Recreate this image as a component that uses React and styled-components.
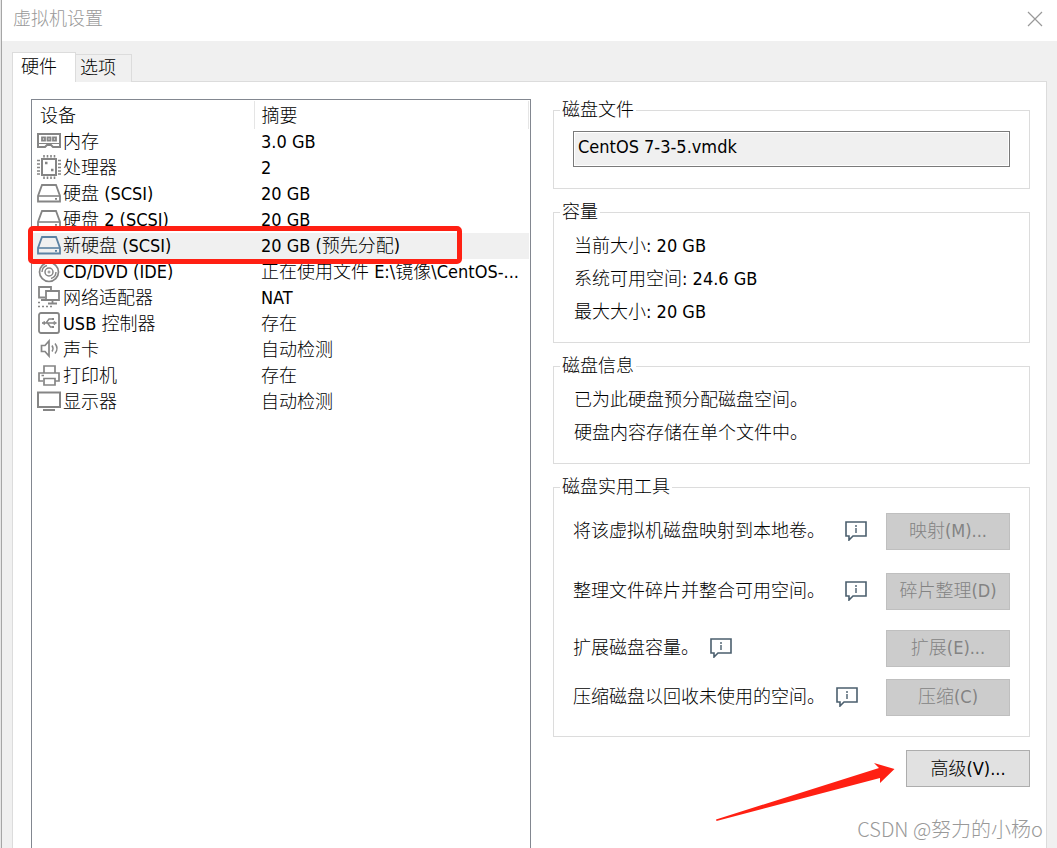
import styled, { createGlobalStyle } from "styled-components";

const GlobalStyle = createGlobalStyle`
  * {
    box-sizing: border-box;
  }
  body {
    margin: 0;
    background: #f0f0f0;
    color: #000;
    font-family: "DejaVu Sans Condensed", "Noto Sans CJK SC", sans-serif;
    font-size: 18px;
    font-weight: 300;
    line-height: 26px;
  }
  button, input {
    font: inherit;
  }
`;

const Window = styled.div`
  position: relative;
  display: flex;
  flex-direction: column;
  height: 100vh;
  overflow: hidden;
  padding-left: 1px;
  border-left: 1px solid #e6e6e6;
  background: #a6a6a6;
`;

const TitleBar = styled.header`
  display: flex;
  flex: none;
  align-items: center;
  justify-content: space-between;
  height: 41px;
  padding: 0 14px 4px 11px;
  background: #fff;
`;

const Title = styled.h1`
  margin: 0;
  color: #999;
  font-size: 18px;
  font-weight: 300;
`;

const CloseButton = styled.button`
  display: flex;
  padding: 0;
  border: 0;
  background: none;
`;

const Body = styled.div`
  display: flex;
  flex-direction: column;
  flex: 1;
  min-height: 0;
  background: #f0f0f0;
`;

const TabBar = styled.div`
  display: flex;
  flex: none;
  align-items: flex-end;
  height: 41px;
  padding: 0 10px;
`;

const Tab = styled.button`
  position: relative;
  height: ${(props) => (props.$active ? 30 : 28)}px;
  width: ${(props) => (props.$active ? 64 : 56)}px;
  padding: 0 0 2px ${(props) => (props.$active ? 8 : 4)}px;
  border: 1px solid #dcdcdc;
  border-left-width: ${(props) => (props.$active ? 1 : 0)}px;
  border-bottom-width: 0;
  background: ${(props) => (props.$active ? "#fff" : "#f0f0f0")};
  color: #000;
  text-align: left;
  z-index: ${(props) => (props.$active ? 1 : 0)};
`;

const Panel = styled.main`
  display: grid;
  grid-template-columns: 500px 1fr;
  gap: 22px;
  flex: 1;
  min-height: 0;
  margin: -1px 10px 0;
  padding: 17px 16px 0 18px;
  border: 1px solid #dcdcdc;
  border-bottom: 0;
  background: #fff;
`;

const DeviceList = styled.section`
  padding: 1px;
  border: 1px solid #828790;
  border-bottom: 0;
`;

const Table = styled.table`
  width: 100%;
  border-collapse: collapse;
  table-layout: fixed;
`;

const HeadCell = styled.th`
  width: ${(props) => props.$width || "auto"};
  height: 28px;
  padding: 2px 0 0 7px;
  border-right: 1px solid #e5e5e5;
  font-weight: 300;
  text-align: left;
`;

const Row = styled.tr`
  background: ${(props) => (props.$selected ? "#f0f0f0" : "#fff")};
`;

const Cell = styled.td`
  height: 26px;
  padding: 0 0 0 7px;
  overflow: hidden;
  text-overflow: ellipsis;
  white-space: nowrap;
`;

const DeviceCell = styled(Cell)`
  padding-left: 4px;
`;

const Device = styled.span`
  display: flex;
  align-items: center;
  gap: 2px;
`;

const Icon = styled.svg`
  flex: none;
  width: 24px;
  height: 24px;
  overflow: visible;
  fill: none;
  stroke: ${(props) => (props.$selected ? "#5c82a3" : "#858585")};
`;

const Details = styled.section`
  margin-top: -2px;
`;

const Group = styled.fieldset`
  min-width: 0;
  height: ${(props) => props.$height}px;
  margin: 0 0 10px;
  padding: ${(props) => props.$top || 8}px 19px 0;
  border: 1px solid #dcdcdc;
`;

const Legend = styled.legend`
  height: 26px;
  margin-left: -13px;
  padding: 0 2px;
`;

const FileField = styled.input`
  display: block;
  width: 100%;
  height: 36px;
  padding: 0 4px 6px;
  border: 1px solid #7a7a7a;
  outline: 0;
  background: #f0f0f0;
  box-shadow: inset 0 0 0 1px #fff;
  color: #000;
`;

const Line = styled.p`
  margin: 0 0 7px 1px;
`;

const Tool = styled.div`
  display: flex;
  align-items: center;
  height: 38px;
  margin-bottom: ${(props) => props.$gap}px;
`;

const InfoButton = styled.button`
  display: flex;
  margin-left: ${(props) => props.$gap}px;
  padding: 0;
  border: 0;
  background: none;
`;

const Button = styled.button`
  width: 124px;
  height: 37px;
  margin-left: auto;
  padding: 0;
  border: 1px solid #adadad;
  background: #e1e1e1;
  color: #000;

  &:disabled {
    border-color: #bfbfbf;
    background: #ccc;
    color: #838383;
  }
`;

const Actions = styled.div`
  display: flex;
  padding-top: 3px;
`;

const Highlight = styled.div`
  position: absolute;
  top: 226px;
  left: 27px;
  width: 434px;
  height: 38px;
  border: 5px solid #ff2013;
  border-radius: 5px;
  pointer-events: none;
`;

const Arrow = styled.svg`
  position: absolute;
  top: 760px;
  left: 712px;
  pointer-events: none;
`;

const Watermark = styled.span`
  position: absolute;
  top: 816px;
  right: 14px;
  color: #999;
  font-family: "Noto Sans CJK SC", sans-serif;
  font-size: 20px;
  white-space: nowrap;
`;

const icons = {
  memory: (
    <>
      <path d="M1 4h22v13h-7l-2-2h-4l-2 2H1z" strokeWidth="2" />
      <path d="M5 7.500h3v3H5zM10.500 7.500h3v3h-3zM16 7.500h3v3h-3z" strokeWidth="1.800" />
      <path d="M2 13.500h20" />
    </>
  ),
  cpu: (
    <>
      <path d="M5 3h14v16H5z" strokeWidth="2" />
      <path
        d="M7 -1v2.500M10.500 -1v2.500M14 -1v2.500M17.500 -1v2.500M7 20.500v2.500M10.500 20.500v2.500M14 20.500v2.500M17.500 20.500v2.500M0 4.500h3M0 8h3M0 11.500h3M0 15h3M0 18h3M21 4.500h3M21 8h3M21 11.500h3M21 15h3M21 18h3"
        strokeWidth="1.600"
      />
      <path d="M8 7h2.500M14 14h2.500" strokeWidth="2.500" />
    </>
  ),
  disk: (
    <>
      <path d="M5 3h14l4 11v5.500H1V14z" strokeWidth="1.800" />
      <path d="M1 14h22" strokeWidth="1.600" />
      <path d="M18 16.800h2" strokeWidth="1.800" />
    </>
  ),
  disc: (
    <>
      <circle cx="12" cy="12" r="9.500" strokeWidth="1.700" />
      <circle cx="12" cy="12" r="4" strokeWidth="1.500" />
      <circle cx="12" cy="12" r="1" />
      <path d="M5 12a7 7 0 0 1 5-6.500M19 12a7 7 0 0 1-5 6.500" strokeWidth="1.400" />
    </>
  ),
  network: (
    <>
      <path d="M8 11.500H2V1h12v4M4 14h5M9 5h13v9H9zM15.500 14v3M11 17.500h9" strokeWidth="1.800" />
      <path d="M1 16.500h2M1 20.500h2M5 20.500h2M9 20.500h2M13 20.500h2" strokeWidth="1.400" />
    </>
  ),
  usb: (
    <>
      <rect x="2" y="1" width="20" height="20" rx="2" strokeWidth="1.800" />
      <path d="M6 11h12M9 11l3-4h3M10.500 11l3 4h2" strokeWidth="1.400" />
      <path d="M7.500 9.500L5 11l2.500 1.500zM17 9.500l2.500 1.500L17 12.500z" />
      <path d="M15 7h2M15 15h2" strokeWidth="2" />
    </>
  ),
  sound: (
    <>
      <path d="M4.500 7.500H8l4-4.500v15l-4-4.500H4.500z" strokeWidth="1.700" />
      <path d="M15 7.500q2 3 0 6M18 5.500q4 5 0 10" strokeWidth="1.500" />
    </>
  ),
  printer: (
    <path
      d="M7 9V2h11v7M6 17H2V9h20v8h-4M7 14.500h11v6.500H7zM4.500 11.500H7"
      strokeWidth="1.700"
    />
  ),
  display: (
    <>
      <path d="M1 2.500h22v14.500H1z" strokeWidth="2" />
      <path d="M6 20h12" strokeWidth="2" />
    </>
  ),
};

const DeviceIcon = ({ name, selected }) => (
  <Icon viewBox="0 0 24 24" $selected={selected} aria-hidden="true">
    {icons[name]}
  </Icon>
);

const devices = [
  { icon: "memory", name: "内存", summary: "3.0 GB" },
  { icon: "cpu", name: "处理器", summary: "2" },
  { icon: "disk", name: "硬盘 (SCSI)", summary: "20 GB" },
  { icon: "disk", name: "硬盘 2 (SCSI)", summary: "20 GB" },
  { icon: "disk", name: "新硬盘 (SCSI)", summary: "20 GB (预先分配)", selected: true },
  { icon: "disc", name: "CD/DVD (IDE)", summary: "正在使用文件 E:\\镜像\\CentOS-..." },
  { icon: "network", name: "网络适配器", summary: "NAT" },
  { icon: "usb", name: "USB 控制器", summary: "存在" },
  { icon: "sound", name: "声卡", summary: "自动检测" },
  { icon: "printer", name: "打印机", summary: "存在" },
  { icon: "display", name: "显示器", summary: "自动检测" },
];

const tools = [
  { text: "将该虚拟机磁盘映射到本地卷。", button: "映射(M)...", gap: 20, after: 22 },
  { text: "整理文件碎片并整合可用空间。", button: "碎片整理(D)", gap: 20, after: 19 },
  { text: "扩展磁盘容量。", button: "扩展(E)...", gap: 11, after: 11 },
  { text: "压缩磁盘以回收未使用的空间。", button: "压缩(C)", gap: 11, after: 0 },
];

const App = () => {
  return (
    <Window>
      <GlobalStyle />
      <TitleBar>
        <Title>虚拟机设置</Title>
        <CloseButton aria-label="关闭">
          <svg width="16" height="16" stroke="#999" strokeWidth="1.2">
            <path d="M1 1l14 14M15 1L1 15" />
          </svg>
        </CloseButton>
      </TitleBar>
      <Body>
        <TabBar role="tablist">
          <Tab role="tab" aria-selected="true" $active>硬件</Tab>
          <Tab role="tab" aria-selected="false">选项</Tab>
        </TabBar>
        <Panel>
          <DeviceList>
            <Table>
              <thead>
                <tr>
                  <HeadCell $width="221px">设备</HeadCell>
                  <HeadCell>摘要</HeadCell>
                </tr>
              </thead>
              <tbody>
                {devices.map((item) => (
                  <Row key={item.name} $selected={item.selected}>
                    <DeviceCell>
                      <Device>
                        <DeviceIcon name={item.icon} selected={item.selected} />
                        {item.name}
                      </Device>
                    </DeviceCell>
                    <Cell>{item.summary}</Cell>
                  </Row>
                ))}
              </tbody>
            </Table>
          </DeviceList>
          <Details>
            <Group $height={92}>
              <Legend>磁盘文件</Legend>
              <FileField aria-label="磁盘文件" value="CentOS 7-3-5.vmdk" readOnly />
            </Group>
            <Group $height={144}>
              <Legend>容量</Legend>
              <Line>当前大小: 20 GB</Line>
              <Line>系统可用空间: 24.6 GB</Line>
              <Line>最大大小: 20 GB</Line>
            </Group>
            <Group $height={111}>
              <Legend>磁盘信息</Legend>
              <Line>已为此硬盘预分配磁盘空间。</Line>
              <Line>硬盘内容存储在单个文件中。</Line>
            </Group>
            <Group $height={263} $top={12}>
              <Legend>磁盘实用工具</Legend>
              {tools.map((tool) => (
                <Tool key={tool.button} $gap={tool.after}>
                  {tool.text}
                  <InfoButton $gap={tool.gap} aria-label="说明">
                    <svg width="22" height="20" fill="none" stroke="#4b5f6e">
                      <path d="M1 1h20v14H8l-4 4v-4H1z" strokeWidth="1.6" />
                      <path d="M11 4v2M11 7v5" strokeWidth="1.4" />
                    </svg>
                  </InfoButton>
                  <Button disabled>{tool.button}</Button>
                </Tool>
              ))}
            </Group>
            <Actions>
              <Button>高级(V)...</Button>
            </Actions>
          </Details>
        </Panel>
      </Body>
      <Highlight />
      <Arrow width="184" height="64" fill="#ff2013">
        <path d="M3 59.500L166 8l-5-5 20.500 6L167 23v-5L3.500 61z" />
      </Arrow>
      <Watermark>CSDN @努力的小杨o</Watermark>
    </Window>
  );
};

export default App;
